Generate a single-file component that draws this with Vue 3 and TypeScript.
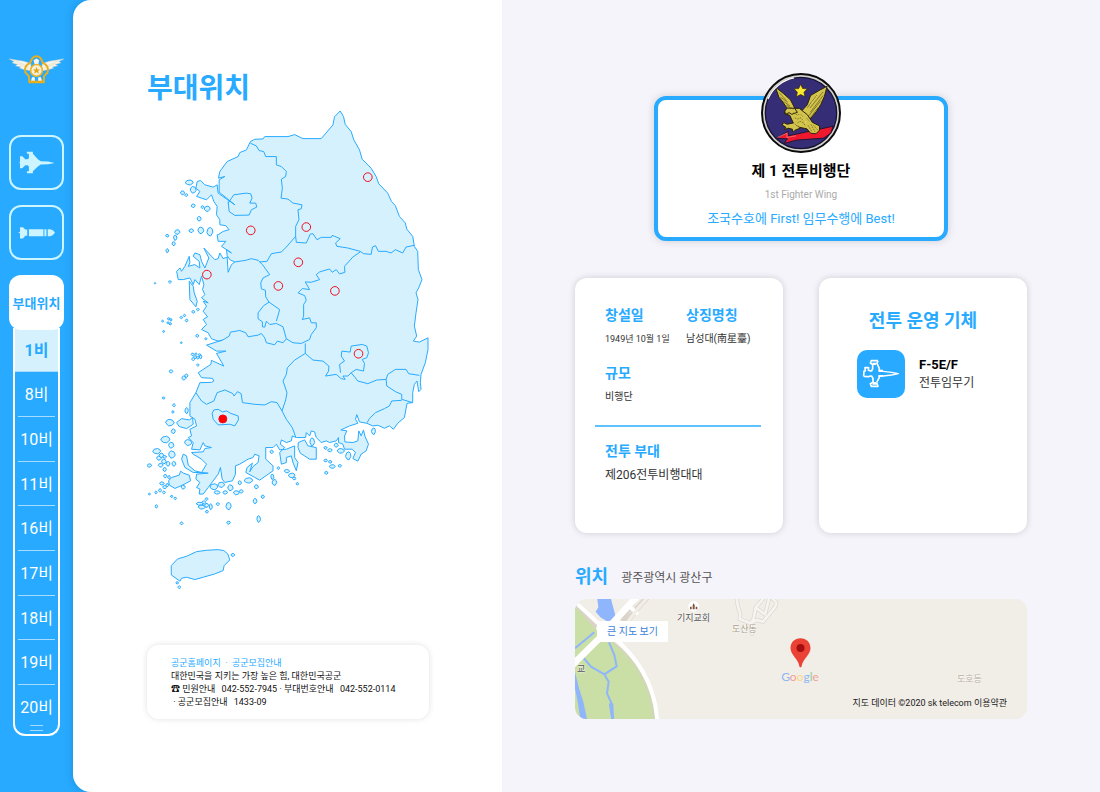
<script setup lang="ts">
interface Isle { x: number; y: number; w: number; h: number }

const units: string[] = ['1비', '8비', '10비', '11비', '16비', '17비', '18비', '19비', '20비']

const bases: { x: number; y: number }[] = [
  { x: 685, y: 352 }, { x: 333, y: 512 }, { x: 500, y: 502 }, { x: 476, y: 608 },
  { x: 201, y: 645 }, { x: 416, y: 679 }, { x: 586, y: 694 }, { x: 657, y: 883 },
]

const isleData: number[][] = [
  [148, 368, 24, 15], [128, 399, 12, 12], [139, 406, 9, 8], [160, 390, 18, 20], [160, 438, 12, 11],
  [188, 442, 9, 8], [202, 447, 18, 16], [178, 477, 12, 14], [154, 513, 14, 11], [183, 512, 18, 20],
  [210, 516, 18, 26], [82, 528, 10, 8], [112, 517, 16, 14], [106, 534, 10, 16], [101, 552, 10, 12],
  [82, 573, 8, 12], [45, 671, 5, 4], [90, 667, 9, 7],
  [160, 757, 9, 8], [174, 750, 9, 7], [124, 774, 8, 7], [134, 768, 7, 7], [140, 783, 8, 8],
  [68, 785, 6, 6], [86, 778, 7, 7], [93, 781, 6, 8], [84, 790, 7, 6], [91, 793, 8, 7], [71, 816, 6, 6],
  [124, 850, 6, 5], [172, 829, 9, 9], [198, 838, 7, 6], [158, 885, 9, 8], [166, 893, 10, 8],
  [160, 899, 9, 9], [174, 895, 8, 8], [182, 892, 8, 12], [179, 886, 8, 6], [168, 884, 6, 7], [174, 917, 8, 6],
  [93, 936, 11, 9], [132, 956, 12, 12], [139, 949, 10, 10], [71, 1016, 9, 6],
  [102, 1038, 8, 9], [99, 1058, 7, 7], [140, 1054, 10, 18], [90, 1090, 26, 20], [100, 1116, 12, 14],
  [145, 1150, 22, 18], [76, 1141, 28, 20], [94, 1158, 16, 18], [50, 1176, 24, 16], [96, 1186, 20, 22],
  [64, 1189, 14, 14], [57, 1197, 14, 12], [28, 1219, 14, 10], [74, 1193, 12, 8], [62, 1218, 14, 12],
  [72, 1207, 14, 14], [84, 1214, 12, 14], [102, 1214, 12, 14], [74, 1231, 10, 12], [76, 1251, 10, 10],
  [87, 1254, 8, 9], [66, 1273, 14, 9], [74, 1284, 12, 9], [82, 1278, 8, 10], [60, 1294, 9, 10],
  [48, 1300, 7, 8], [28, 1305, 7, 5], [72, 1300, 8, 8], [95, 1312, 8, 6], [106, 1318, 8, 7], [49, 1342, 7, 10],
  [130, 1284, 12, 12], [222, 1283, 24, 18], [232, 1300, 18, 10], [244, 1277, 20, 16], [272, 1286, 16, 18],
  [256, 1300, 14, 10], [290, 1301, 18, 12], [304, 1297, 12, 10], [300, 1271, 10, 12], [326, 1264, 26, 16],
  [350, 1283, 12, 12], [200, 1320, 9, 8], [180, 1334, 22, 9], [192, 1330, 12, 9], [186, 1344, 22, 12],
  [200, 1339, 12, 12], [213, 1343, 9, 18], [201, 1358, 9, 8], [234, 1335, 10, 8], [266, 1341, 16, 22],
  [346, 1326, 11, 16], [369, 1313, 10, 10], [357, 1380, 11, 20], [266, 1391, 11, 9], [125, 1393, 9, 8],
  [404, 1270, 14, 18], [398, 1253, 9, 16], [416, 1227, 8, 8], [442, 1236, 16, 10], [456, 1249, 20, 14],
  [464, 1258, 10, 8], [473, 1274, 8, 7], [396, 1178, 10, 10],
  [558, 1204, 11, 8], [572, 1208, 10, 8], [578, 1222, 18, 11], [601, 1220, 10, 8], [560, 1241, 10, 9],
  [558, 1166, 10, 8], [571, 1173, 14, 9], [590, 1158, 12, 12], [702, 1116, 12, 20], [604, 1175, 22, 14],
  [626, 1190, 16, 24], [518, 1148, 14, 24], [279, 1488, 11, 9], [112, 1572, 8, 7], [118, 1585, 8, 8],
]
const isles: Isle[] = isleData.map(([x, y, w, h]) => ({ x, y, w, h }))

const outline = ([
  [1, 0.1], [0.3, 1], [-0.45, 0.8], [-1, 0.15], [-0.6, -0.75], [0.25, -1], [0.8, -0.6],
] as number[][])

function islePath(isle: Isle, index: number): string {
  const flip = index % 2 === 0 ? 1 : -1
  const points = outline.map(([px, py]) =>
    `${(isle.x + (px * flip * isle.w) / 2).toFixed(1)},${(isle.y + (py * isle.h) / 2).toFixed(1)}`)
  return `M${points.join('L')}Z`
}

const mapTitle = '부대위치'
</script>

<template>
  <div class="app">
    <nav class="side" aria-label="주 메뉴">
      <a class="logo" href="#" aria-label="공군">
        <svg viewBox="26 164 168 88" aria-hidden="true">
          <g fill="#f7f6ee" stroke="#dcd8c4" stroke-width="1.5">
            <path d="M27 176 L70 183 L92 190 L94 212 L72 208 L58 204 L63 201 L46 197 L53 193 L36 188 L42 184Z" />
            <path d="M193 176 L150 183 L128 190 L126 212 L148 208 L162 204 L157 201 L174 197 L167 193 L184 188 L178 184Z" />
          </g>
          <path d="M42 181L88 201M52 190L86 205M178 181L132 201M168 190L134 205" stroke="#e0dac0" stroke-width="2" fill="none" />
          <path d="M110 168C99 168 94 177 91 188C76 194 73 206 76 217C80 223 85 224 87 230L88 247H132L133 230C135 224 140 223 144 217C147 206 144 194 129 188C126 177 121 168 110 168Z" fill="none" stroke="#e9ae1c" stroke-width="6" />
          <path d="M110 175l8 5-3 16h-10l-4-16z" fill="#f7f6ee" />
          <circle cx="110" cy="211" r="18" fill="#f4f1de" stroke="#efb51d" stroke-width="5" />
          <path d="M110 200l3 8h8l-6 5 2 8-7-5-7 5 2-8-6-5h8z" fill="#e3a417" />
          <path d="M93 243l4-12 8 2v11zM127 243l-4-12-8 2v11z" fill="#f7f6ee" />
          <path d="M88 246h44" stroke="#e9ae1c" stroke-width="7" />
        </svg>
      </a>
      <button class="tile" type="button" aria-label="항공기">
        <svg viewBox="54 452 112 70" aria-hidden="true">
          <path fill="#cdf5ff" d="M54 487l6-2V468h7l9 9h7l4-3V460h-6v-6h18v6l16 18 8 5 22 1 20 4-20 4-22 1-8 5-16 15v6H81v-6h6v-14l-4-4h-7l-9 9h-7v-17z" />
        </svg>
      </button>
      <button class="tile" type="button" aria-label="유도무기">
        <svg viewBox="54 662 112 70" aria-hidden="true">
          <path fill="#cdf5ff" d="M54 697l6-2V681h9l7 7h6v19h-6l-7 8h-9v-16zM87 687h44v21H87zM134 687h6v21h-6zM144 687h8q10 3 14 10-4 8-14 11h-8z" />
        </svg>
      </button>
      <button class="tile current" type="button">부대위치</button>
      <ul class="units">
        <li v-for="(unit, i) in units" :key="unit">
          <a href="#" :class="{ active: i === 0 }">{{ unit }}</a>
        </li>
      </ul>
    </nav>

    <main class="main">
      <section class="left">
        <h1>{{ mapTitle }}</h1>
        <svg class="korea" viewBox="21 150 848 1446" role="img" aria-label="부대위치">
          <g class="land">
            <path d="M602 153L612 170L617 193L635 215L643 240L660 270L668 298L695 325L710 350L718 372L745 400L756 425L768 438L780 470L798 490L802 508L820 530L825 560L835 575L837 630L848 660L838 685L830 700L836 720L830 760L825 800L832 830L822 845L840 848L866 835L866 870L858 910L845 945L843 970L845 990L838 997L833 965L825 975L820 1000L820 1030L803 1032L795 1075L775 1092L762 1110L750 1100L735 1107L715 1098L700 1100L682 1092L660 1088L652 1066L648 1080L655 1092L630 1100L604 1112L622 1115L615 1130L616 1148L640 1150L655 1145L658 1115L665 1130L672 1112L676 1130L687 1155L680 1175L665 1185L655 1206L640 1198L648 1180L638 1170L615 1170L610 1155L597 1150L597 1135L590 1145L570 1150L560 1145L545 1150L530 1135L525 1118L515 1115L510 1130L500 1120L498 1135L470 1135L458 1130L455 1145L440 1150L425 1142L422 1155L435 1165L420 1180L425 1215L440 1210L440 1195L455 1190L460 1210L470 1235L475 1210L465 1195L465 1160L440 1170L420 1172L410 1155L400 1165L378 1165L378 1200L400 1220L400 1235L360 1263L345 1255L318 1240L322 1225L338 1212L330 1238L340 1222L355 1210L358 1190L345 1185L340 1195L325 1200L300 1215L287 1220L287 1245L278 1265L255 1270L247 1260L242 1225L235 1245L205 1285L190 1305L178 1305L180 1290L170 1285L180 1270L168 1260L170 1245L205 1242L185 1240L165 1235L145 1218L140 1190L130 1185L125 1200L135 1225L160 1240L185 1240L200 1215L185 1200L160 1185L155 1180L190 1178L195 1168L215 1165L195 1160L190 1150L180 1172L155 1170L160 1150L145 1135L155 1130L150 1110L170 1100L165 1080L150 1070L150 1030L168 1000L180 970L215 969L222 965L218 957L185 955L175 940L190 930L213 915L215 903L252 920L230 882L258 875L230 875L200 857L248 842L235 845L215 838L205 820L185 810L200 795L190 780L203 772L190 755L200 740L190 725L205 730L185 715L195 705L188 690L192 675L185 650L178 675L165 660L160 675L150 655L130 660L115 660L110 635L120 625L125 635L135 620L148 590L150 610L145 620L165 615L180 625L178 605L160 590L165 580L180 585L185 605L195 625L207 595L192 565L215 590L225 600L235 597L240 580L250 597L262 592L265 638L275 615L285 607L270 600L262 588L260 570L275 580L245 560L258 545L235 545L232 525L235 525L250 515L268 510L258 498L240 495L240 480L230 465L232 440L222 425L215 405L200 420L185 415L170 410L180 395L168 385L172 365L182 362L195 375L220 382L232 375L235 400L285 435L238 397L238 360L255 350L236 355L240 335L262 305L295 290L300 278L320 270L332 245L345 238L370 237L375 230L445 230L465 224L490 236L545 236L580 195L585 170Z" />
            <path d="M94 1520L113 1500L140 1492L170 1478L200 1474L235 1472L252 1475L264 1485L270 1503L253 1520L250 1535L225 1545L190 1555L165 1562L140 1555L125 1558L120 1567L94 1548Z" />
            <path d="M86 1265L95 1255L118 1248L122 1236L130 1242L148 1248L152 1265L128 1278L105 1288L88 1278Z" />
            <path d="M110 1090L125 1078L148 1082L158 1075L160 1095L140 1108L118 1102Z" />
            <path d="M476 1150L495 1142L505 1160L530 1165L530 1200L510 1200L482 1182L475 1165Z" />
            <path d="M148 665L160 680L163 700L172 725L168 742L150 720Z" />
            <path v-for="(isle, i) in isles" :key="i" :d="islePath(isle, i)" />
          </g>
          <g class="border">
            <path d="M332 250L350 258L358 272L372 275L378 290L410 290L410 315L425 320L440 335L438 350L425 358L428 385L424 415L445 418L460 430L487 435L485 447L475 450L478 480L468 500L468 530L440 562L425 577L395 582L382 605L360 607" />
            <path d="M265 430L282 405L320 400L333 402L337 415L330 430L348 430L351 442L335 450L328 466L285 467L268 455L265 425" />
            <path d="M468 530L470 548L500 550L512 523L520 522L532 540L545 533L575 533L578 527L602 537L588 550L592 560L625 565L662 575L672 582L695 584L699 562L708 558L717 575L740 575L755 580L768 570L790 580L800 562L825 557" />
            <path d="M662 577L640 592L615 620L616 638L600 643L590 630L578 638L570 628L540 637L530 645L540 660L515 668L497 667L510 690L488 687L475 700L495 708L500 722L492 735L492 770L488 780L510 775L515 790L530 790L530 805L515 825L510 840L485 852L460 850L440 838L430 802L410 792L390 795L380 785L375 803L368 802L368 787L355 778L355 760L372 738L388 728L420 750L410 785" />
            <path d="M285 607L318 602L335 597L355 602L368 615L390 645L370 655L363 670L365 688L377 692L378 712L388 728" />
            <path d="M248 842L268 830L272 818L300 813L318 820L325 832L355 827L365 822L375 835L380 850L405 856L413 845L430 850L440 838" />
            <path d="M497 852L497 882L465 902L443 925L440 945L430 965L442 1000L438 1022L427 1055L440 1080L458 1105L468 1133" />
            <path d="M497 882L520 902L550 905L568 920L567 935L558 950L590 945L605 958L617 960L610 950L625 950L635 940L655 965L685 973L712 962L740 960L745 945L768 930L800 930L808 943L840 948" />
            <path d="M603 940L600 915L615 905L605 890L607 875L632 878L635 860L668 855L682 860L687 880L682 895L668 900L675 912L672 935L650 930L635 940" />
            <path d="M740 960L742 980L770 998L787 1005L787 1020L820 1030M787 1023L757 1025L750 1040L735 1048L708 1060L690 1078L683 1090" />
            <path d="M168 1000L185 1025L200 1035L222 1025L232 1000L255 992L278 1002L283 1010L293 997L304 1003L308 1030L345 1035L375 1037L395 1027L412 1030L427 1055" />
            <path d="M217 1062L222 1052L235 1050L248 1058L260 1055L272 1062L295 1070L296 1082L285 1100L270 1095L235 1097L220 1080Z" />
          </g>
          <g class="bases">
            <circle v-for="(base, i) in bases" :key="i" :cx="base.x" :cy="base.y" r="13" />
            <circle class="on" cx="249" cy="1079" r="12" />
          </g>
        </svg>
        <footer class="contact">
          <p class="links"><a href="#">공군홈페이지</a> &nbsp;·&nbsp; <a href="#">공군모집안내</a></p>
          <p>대한민국을 지키는 가장 높은 힘, 대한민국공군</p>
          <p>☎ 민원안내 <span class="tel">042-552-7945</span> · 부대번호안내 <span class="tel">042-552-0114</span></p>
          <p>&nbsp;· 공군모집안내 <span class="tel">1433-09</span></p>
        </footer>
      </section>

      <section class="right">
        <article class="hero">
          <svg class="patch" viewBox="30 23 242 242" aria-hidden="true">
            <circle cx="151" cy="144" r="118" fill="#d3d1cc" stroke="#0b0b0d" stroke-width="6" />
            <circle cx="151" cy="144" r="108" fill="#352d75" stroke="#171432" stroke-width="4" />
            <path d="M150 57l6 13 14 1-10 10 3 14-13-7-13 7 3-14-10-10 14-1z" fill="#fbe832" stroke="#302300" stroke-width="2" />
            <path d="M77 221L112 199L113 213L248 184L241 205L220 220L138 226L100 236L110 222Z" fill="#f0182c" stroke="#281335" stroke-width="3" />
            <path d="M80 218L109 205L108 218L136 213" fill="none" stroke="#fa8b8f" stroke-width="2" />
            <g fill="#d2c34c" stroke="#282009" stroke-width="3" stroke-linejoin="round">
              <path d="M74 66L99 86L119 104L132 129L142 142L127 146L107 127L94 108L84 96Z" />
              <path d="M230 63L222 93L211 118L198 139L181 160L155 156L152 139L170 119L180 91L204 77Z" />
              <path d="M126 130L146 130L171 150L185 172L207 183L207 196L196 207L180 205L169 192L145 187L129 177L117 151L101 146L105 135Z" />
              <path d="M109 129L132 130L140 142L123 148L115 143L104 148L102 138Z" />
              <path d="M128 174L109 178L99 173L94 180L105 187L101 194L112 190L125 193L127 202L133 196L148 190" />
            </g>
            <g stroke="#5f541a" stroke-width="2" fill="none">
              <path d="M85 83l22 22M89 96l22 15M98 109l19 13M106 120l22 12M218 80l-40 49M218 91l-39 51M211 107l-37 46M199 90l-29 38M204 126l-24 31" />
              <path d="M129 143l10 7 10-3 8 9M132 159l9 3 10-4 8 11M140 174l8-5 11 5 5 10M169 160l7 9M172 181l12 19M181 178l13 24M189 181l13 15" stroke-dasharray="5 3" />
            </g>
            <path d="M211 76l-32 43M98 91l21 24M145 145l22 30" stroke="#f2e77c" stroke-width="2" stroke-dasharray="6 4" />
            <path d="M51 102A108 108 0 0 1 130 38" fill="none" stroke="#fff" stroke-width="4" />
          </svg>
          <h2>제 1 전투비행단</h2>
          <p class="en">1st Fighter Wing</p>
          <p class="motto">조국수호에 First! 임무수행에 Best!</p>
        </article>

        <div class="cards">
          <article class="card info">
            <dl class="facts">
              <div><dt>창설일</dt><dd class="date">1949년 10월 1일</dd></div>
              <div><dt>상징명칭</dt><dd>남성대(南星臺)</dd></div>
              <div><dt>규모</dt><dd>비행단</dd></div>
            </dl>
            <dl class="squad">
              <dt>전투 부대</dt><dd>제206전투비행대대</dd>
            </dl>
          </article>
          <article class="card fleet">
            <h3>전투 운영 기체</h3>
            <a class="plane" href="#">
              <span class="badge">
                <svg viewBox="144 240 144 144" aria-hidden="true">
                  <path fill="none" stroke="#fff" stroke-width="5" stroke-linejoin="round" d="M164 319L165 303L169 303L168 293H179L178 301L187 304M207 272L204 280L211 296L211 301M164 319L178 320L187 317M203 338L211 322V318M187 304L191 296V284L184 279L187 272H207M187 317L192 325V337L184 341L187 349H207L203 338" />
                  <path fill="none" stroke="#fff" stroke-width="4" stroke-linejoin="round" d="M210 304L222 304L248 307L268 311L248 315L222 318H210" />
                  <path fill="#fff" d="M190 278h13l-3 7h-9zM190 344l2-8h8l3 8zM208 299h14v6h-14zM208 315h14v5h-14z" />
                </svg>
              </span>
              <span><strong>F-5E/F</strong><span class="role">전투임무기</span></span>
            </a>
          </article>
        </div>

        <div class="place">
          <h2>위치</h2><p>광주광역시 광산구</p>
        </div>
        <div class="gmap">
          <svg class="ground" viewBox="30 132 1356 360" preserveAspectRatio="xMinYMin slice" aria-hidden="true">
            <path fill="#f1ede7" d="M30 132H2400V900H30z" />
            <path fill="#c9dfa5" d="M30 150L100 215L150 265C205 305 265 390 272 492H30Z" />
            <path fill="none" stroke="#d8d0c5" stroke-width="4" d="M145 262C205 310 258 388 266 492" />
            <path fill="#8fb5fc" d="M97 132H138L153 188L128 200L106 187L92 170L100 157ZM30 350L42 400L55 440L66 492H46L38 440L30 400Z" />
            <g fill="none" stroke="#8fb5fc" stroke-linejoin="round">
              <path stroke-width="6" d="M30 280L88 232M48 300L78 335L118 358L155 334L148 300L132 262M118 358L131 380L126 415L142 450L144 492" />
              <path stroke-width="9" d="M136 445L143 492" />
            </g>
            <g fill="none" stroke="#d9d3ca" stroke-width="16"><path d="M180 207L222 154L253 120M170 197L210 132M30 142L95 215" /></g>
            <g fill="none" stroke="#fff" stroke-linecap="round">
              <path stroke-width="20" d="M24 328L110 243L156 190L213 128" />
              <path stroke-width="12" d="M30 140L105 210M150 250C205 300 270 375 277 500M200 160L215 174" />
              <path stroke-width="22" d="M105 220L120 245" />
            </g>
            <path fill="none" stroke="#f1ede7" stroke-width="10" d="M185 205L224 154L258 116" />
            <path fill="none" stroke="#d9d5ce" stroke-width="12" stroke-linecap="round" d="M515 132L519 155L526 178L524 192L557 205L575 195L594 200L631 155L634 142L622 130M594 132L572 158L566 190L557 205L561 237M572 158L600 178L612 132" />
            <path fill="none" stroke="#f6f4f0" stroke-width="8" stroke-linecap="round" d="M515 132L519 155L526 178L524 192L557 205L575 195L594 200L631 155L634 142L622 130M594 132L572 158L566 190L557 205L561 237M572 158L600 178L612 132" />
            <circle cx="386" cy="154" r="16" fill="#fff" />
            <path d="M375 163v-8h5v8zM383 163v-13l3-5 3 5v13zM392 163v-8h5v8z" fill="#81523f" />
          </svg>
          <a class="bigger" href="#">큰 지도 보기</a>
          <span class="label church">기지교회</span>
          <span class="label school">교</span>
          <span class="label dosan">도산동</span>
          <span class="label doho">도호동</span>
          <div class="center">
            <svg viewBox="674 250 62 90" aria-hidden="true">
              <path fill="#ea4335" d="M705 251C687 251 675 264 675 281C675 301 698 312 702 336Q705 340 708 336C712 312 735 301 735 281C735 264 723 251 705 251Z" />
              <circle cx="705" cy="280" r="12" fill="#a50e0e" />
            </svg>
            <span class="google"><i class="b">G</i><i class="r">o</i><i class="y">o</i><i class="b">g</i><i class="g">l</i><i class="r">e</i></span>
          </div>
          <small>지도 데이터 ©2020 sk telecom 이용약관</small>
        </div>
      </section>
    </main>
  </div>
</template>

<style>
body { margin: 0; }
</style>

<style scoped>
* { box-sizing: border-box; }
h1, h2, h3, p, dl, dd, ul { margin: 0; padding: 0; }
a { color: inherit; text-decoration: none; }
.app {
  display: flex;
  min-height: 100vh;
  background: #27aaff;
  color: #333;
  font-family: Roboto, "Noto Sans CJK KR", "Noto Sans", sans-serif;
}
.side {
  flex: 0 0 73px;
  display: flex;
  flex-direction: column;
  align-items: center;
  padding-top: 55px;
}
.logo { width: 55px; margin-bottom: 51px; }
.logo svg { display: block; width: 100%; }
.tile {
  display: flex;
  align-items: center;
  justify-content: center;
  width: 55px;
  height: 55px;
  margin-bottom: 15px;
  padding: 0;
  border: 2px solid #cdf5ff;
  border-radius: 12px;
  background: transparent;
  font: inherit;
}
.tile svg { width: 37px; }
.tile.current {
  position: relative;
  z-index: 1;
  margin-bottom: -2px;
  border: 0;
  background: #fff;
  color: #27aaff;
  font-size: 13px;
  font-weight: 700;
  white-space: nowrap;
}
.units {
  position: relative;
  display: grid;
  grid-auto-rows: 1fr;
  width: 47px;
  height: 408px;
  padding-bottom: 4px;
  border: solid #fff;
  border-width: 0 2px 2px;
  border-radius: 0 0 12px 12px;
  list-style: none;
}
.units::after {
  content: "";
  position: absolute;
  bottom: 3px;
  left: 15px;
  width: 13px;
  height: 4px;
  border: solid #a8dcff;
  border-width: 1px 0;
}
.units li { display: grid; }
.units a {
  display: flex;
  align-items: center;
  justify-content: center;
  margin: 0 3px;
  padding-top: 2px;
  border-bottom: 1px solid #a8dcff;
  color: #fff;
  font-size: 16px;
  line-height: 20px;
  white-space: nowrap;
}
.units li:last-child a { border-bottom: 0; }
.units a.active { margin: 0; background: #d5f1fe; color: #27aaff; font-weight: 700; }

.main {
  flex: 1;
  display: grid;
  grid-template-columns: minmax(0, 429fr) minmax(0, 598fr);
  min-width: 0;
  overflow: hidden;
  border-radius: 18px 0 0 18px;
  background: #fff;
  box-shadow: 0 0 8px rgba(0, 60, 120, 0.25);
}
.left { padding: 69px 73px 0 74px; }
h1 { color: #27aaff; font-size: 28px; line-height: 40px; font-weight: 700; }
.korea { display: block; width: 100%; margin-top: 1px; }
.land path { fill: #d5f1fe; stroke: #27aaff; stroke-width: 3; stroke-linejoin: round; }
.border path { fill: none; stroke: #27aaff; stroke-width: 3; stroke-linejoin: round; }
.bases circle { fill: none; stroke: #f00c18; stroke-width: 3; }
.bases .on { fill: #f00; }
.contact {
  margin-top: 54px;
  padding: 12px 0 10px 24px;
  border-radius: 12px;
  background: #fff;
  box-shadow: 0 0 6px rgba(0, 0, 0, 0.12);
  color: #111;
  font-size: 9px;
  line-height: 13px;
  white-space: nowrap;
}
.links { color: #27aaff; }
.tel { margin-left: 4px; }

.right { padding: 73px; background: #f5f4fa; }
.hero {
  display: flex;
  flex-direction: column;
  align-items: center;
  width: 65%;
  margin: 23px auto 37px;
  padding-bottom: 8px;
  border: 4px solid #27aaff;
  border-radius: 12px;
  background: #fff;
  box-shadow: 0 0 8px rgba(0, 0, 0, 0.16);
}
.patch { width: 80px; height: 80px; margin-top: -27px; }
.hero h2 { margin-top: 7px; color: #000; font-size: 15px; line-height: 22px; font-weight: 700; }
.en { margin-top: 4px; color: #aaa; font-size: 10px; line-height: 18px; }
.motto { margin-top: 5px; color: #27aaff; font-size: 13px; line-height: 20px; }
.cards { display: grid; grid-template-columns: 1fr 1fr; gap: 36px; }
.card {
  min-height: 255px;
  border-radius: 12px;
  background: #fff;
  box-shadow: 0 0 7px rgba(0, 0, 0, 0.16);
}
.info { padding: 26px 22px 20px 20px; }
.facts {
  display: grid;
  grid-template-columns: 81px 1fr;
  row-gap: 14px;
  padding: 0 0 19px 10px;
  border-bottom: 2px solid #5fc1ff;
  white-space: nowrap;
}
dt { color: #27aaff; font-size: 14px; line-height: 22px; font-weight: 700; }
dd { margin-top: 4px; color: #333; font-size: 10px; line-height: 18px; }
.date { font-size: 9px; }
.squad { padding: 13px 0 0 10px; }
.squad dd { font-size: 12px; }
.fleet { padding: 30px 38px; }
.fleet h3 { margin: 0; color: #27aaff; font-size: 18px; line-height: 26px; font-weight: 700; text-align: center; }
.plane { display: flex; align-items: center; gap: 14px; margin-top: 16px; }
.badge { width: 48px; height: 48px; overflow: hidden; border-radius: 10px; background: #27aaff; }
.badge svg { display: block; width: 100%; }
strong, .role { display: block; line-height: 18px; }
strong { color: #000; font-size: 13px; }
.role { font-size: 12px; }
.place { display: flex; align-items: center; gap: 13px; margin-top: 30px; }
.place h2 { color: #27aaff; font-size: 18px; line-height: 28px; }
.place p { padding-top: 2px; color: #555; font-size: 12px; line-height: 26px; }
.gmap {
  position: relative;
  height: 120px;
  margin-top: 8px;
  overflow: hidden;
  border-radius: 12px;
  background: #f1ede7;
}
.ground { display: block; width: 100%; height: 100%; }
.bigger {
  position: absolute;
  top: 22px;
  left: 22px;
  width: 71px;
  background: #fff;
  color: #3b7edb;
  font-size: 10px;
  line-height: 21px;
  text-align: center;
}
.label { position: absolute; font-size: 9px; line-height: 12px; color: #555; text-shadow: 0 0 2px #fff, 0 0 2px #fff; }
.church { top: 13px; left: 102px; }
.school { top: 64px; left: 2px; }
.dosan { top: 24px; left: 157px; color: #ab9f8c; }
.doho { top: 74px; left: 382px; color: #b8ad9b; }
.center {
  position: absolute;
  top: 39px;
  left: 50%;
  display: flex;
  flex-direction: column;
  align-items: center;
  width: 40px;
  margin-left: -21px;
}
.center svg { width: 21px; height: 30px; }
.google { margin-top: 1px; font-family: Lato, sans-serif; font-size: 12px; line-height: 16px; }
.google i { font-style: normal; }
.b { color: #8db6f7; }
.r { color: #f3a099; }
.y { color: #fbdb80; }
.g { color: #8dd19f; }
small { position: absolute; right: 20px; bottom: 9px; color: #222; font-size: 9px; line-height: 14px; }
</style>
